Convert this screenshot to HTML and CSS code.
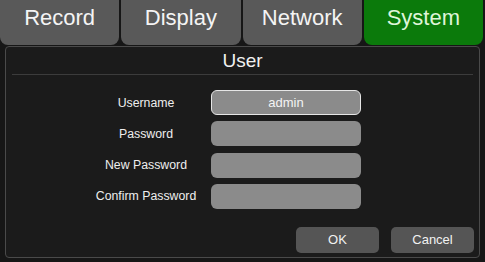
FILE: index.html
```html
<!DOCTYPE html>
<html lang="en">
<head>
  <meta charset="UTF-8" />
  <title>System - User</title>
  <link rel="stylesheet" href="styles.css">
</head>
<body>

  <!-- Top tabs -->
  <div class="tabs">
    <div class="tab">Record</div>
    <div class="tab">Display</div>
    <div class="tab">Network</div>
    <div class="tab active">System</div>
  </div>

  <!-- User panel -->
  <div class="panel">
    <div class="panel-title">User</div>
    <div class="form">
      <label>Username</label>
      <div class="field focused">admin</div>
      <label>Password</label>
      <div class="field"></div>
      <label>New Password</label>
      <div class="field"></div>
      <label>Confirm Password</label>
      <div class="field"></div>
    </div>
    <div class="actions">
      <button class="btn">OK</button>
      <button class="btn">Cancel</button>
    </div>
  </div>

</body>
</html>
```
FILE: styles.css
```css
:root {
  --tab: #595959;
  --active: #0b7a0b;
  --panel: #1b1b1b;
  --field: #8b8b8b;
  --btn: #555555;
  --text: #f2f2f2;
}

* {
  margin: 0;
  padding: 0;
  box-sizing: border-box;
}

html,
body {
  width: 100%;
  height: 100%;
  overflow: hidden;
  font-family: 'Liberation Sans', Arial, sans-serif;
  background: #161616;
  color: var(--text);
}

.tabs {
  display: flex;
  gap: 2px;
  height: 45px;
  padding-right: 2px;
}

.tab {
  flex: 1;
  display: flex;
  justify-content: center;
  align-items: center;
  padding-bottom: 9px;
  background: var(--tab);
  border-radius: 0 0 8px 8px;
  font-size: 22px;
  color: #f4f4f4;
}

.tab.active {
  background: var(--active);
  color: #dff5d8;
}

.panel {
  margin: 1px 5px 0 5px;
  height: 212px;
  background: var(--panel);
  border: 1px solid #4a4a4a;
  border-radius: 4px;
  display: flex;
  flex-direction: column;
}

.panel-title {
  height: 28px;
  margin: 0 6px;
  display: flex;
  justify-content: center;
  align-items: center;
  font-size: 19px;
  border-bottom: 1px solid #3c3c3c;
  color: #f0f0f0;
}

.form {
  display: grid;
  grid-template-columns: 120px 150px;
  grid-auto-rows: 25px;
  column-gap: 5px;
  row-gap: 6.3px;
  padding-left: 80px;
  margin-top: 15px;
}

.form label {
  display: flex;
  justify-content: center;
  align-items: center;
  font-size: 12.3px;
  color: #eeeeee;
}

.field {
  background: var(--field);
  border-radius: 6px;
  display: flex;
  justify-content: center;
  align-items: center;
  font-size: 13px;
  color: #f4f4f4;
}

.field.focused {
  border: 1.5px solid #e6e6e6;
}

.actions {
  display: flex;
  justify-content: flex-end;
  gap: 12px;
  margin-top: 18px;
  padding-right: 5px;
}

.btn {
  width: 83px;
  height: 26px;
  background: var(--btn);
  border: none;
  border-radius: 5px;
  font-family: inherit;
  font-size: 13px;
  color: #f2f2f2;
}
```
